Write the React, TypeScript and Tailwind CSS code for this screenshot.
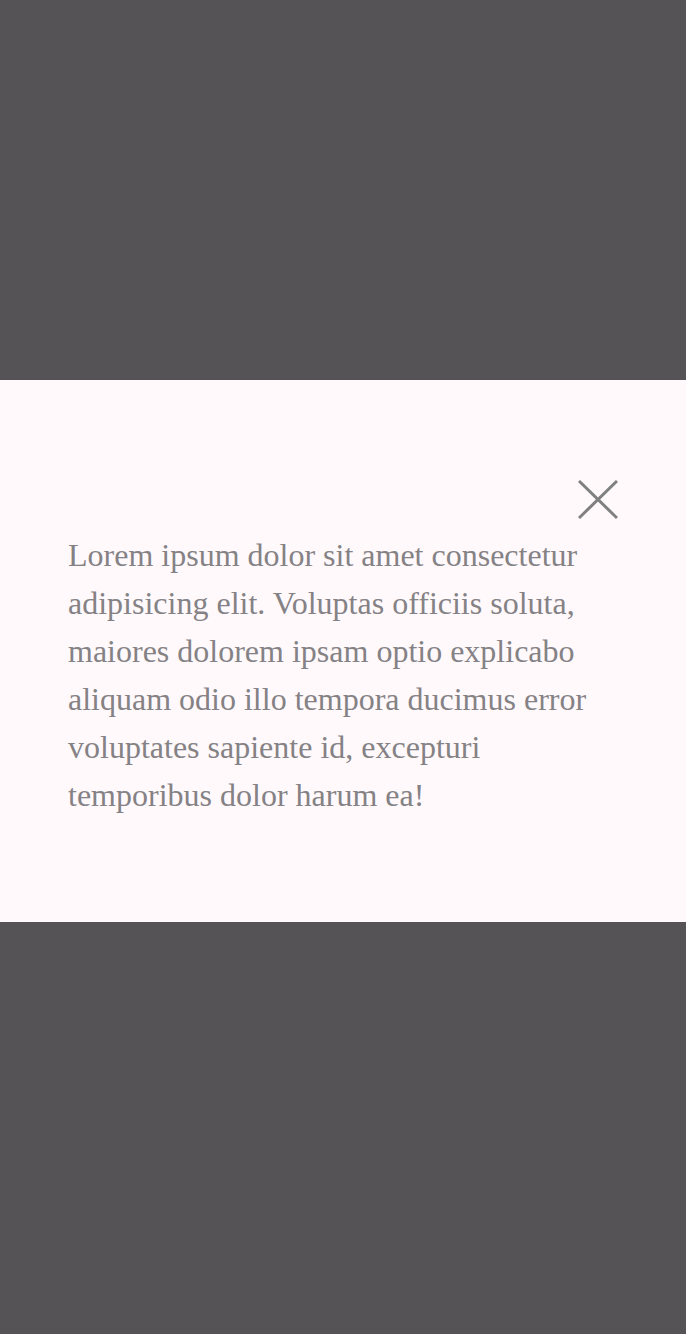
export default function App() {
  return (
    <div className="h-[1334px] w-full bg-[#555355] pt-[380px]">
      <div className="bg-[#fff9fc] px-[68px] pt-[100px] pb-[103px]">
        <div className="flex justify-end">
          <button aria-label="close" className="h-[40px] w-[40px]">
            <svg width="40" height="40" viewBox="0 0 40 40" fill="none">
              <path d="M1 1 L39 38 M39 1 L1 38" stroke="#808080" strokeWidth="3" />
            </svg>
          </button>
        </div>
        <p
          className="mt-[11px] text-[32px] leading-[48px] text-[#858285]"
          style={{ fontFamily: '"Liberation Serif", serif' }}
        >
          Lorem ipsum dolor sit amet consectetur adipisicing elit. Voluptas officiis soluta, maiores dolorem ipsam optio explicabo aliquam odio illo tempora ducimus error voluptates sapiente id, excepturi temporibus dolor harum ea!
        </p>
      </div>
    </div>
  );
}
